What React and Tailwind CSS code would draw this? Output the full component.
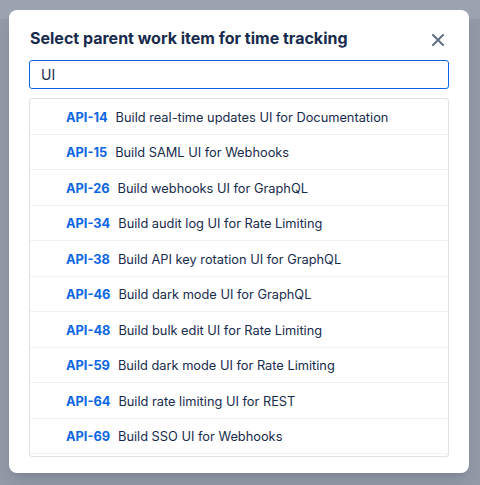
import React, { useState } from 'react';

const items = [
  { key: 'API-14', summary: 'Build real-time updates UI for Documentation' },
  { key: 'API-15', summary: 'Build SAML UI for Webhooks' },
  { key: 'API-26', summary: 'Build webhooks UI for GraphQL' },
  { key: 'API-34', summary: 'Build audit log UI for Rate Limiting' },
  { key: 'API-38', summary: 'Build API key rotation UI for GraphQL' },
  { key: 'API-46', summary: 'Build dark mode UI for GraphQL' },
  { key: 'API-48', summary: 'Build bulk edit UI for Rate Limiting' },
  { key: 'API-59', summary: 'Build dark mode UI for Rate Limiting' },
  { key: 'API-64', summary: 'Build rate limiting UI for REST' },
  { key: 'API-69', summary: 'Build SSO UI for Webhooks' },
];

const App = () => {
  const [query, setQuery] = useState('UI');

  return (
    <div className="relative w-[480px] h-[485px] overflow-hidden bg-[#929aa8] font-['Inter','Liberation_Sans',sans-serif]">
      <div className="absolute inset-x-0 top-0 h-[19px] bg-[#9ca3b0]" />
      <div className="relative pt-[10px] pl-[9px]">
        <div className="w-[460px] h-[463px] bg-white rounded-[8px] shadow-lg px-[20px] pt-[18px]">
          <div className="flex items-center justify-between h-[20px]">
            <h3 className="text-[16px] font-bold text-[#172b4d] pl-px">
              Select parent work item for time tracking
            </h3>
            <button type="button" className="w-[20px] h-[20px] flex items-center justify-center mr-[1px] mt-[3px]">
              <svg width="12" height="12" viewBox="0 0 12 12" fill="none">
                <path d="M1 1L11 11M11 1L1 11" stroke="#626f86" strokeWidth="2" strokeLinecap="round" />
              </svg>
            </button>
          </div>
          <input
            type="text"
            value={query}
            onChange={(e) => setQuery(e.target.value)}
            className="mt-[12px] w-[420px] h-[29px] border border-[#0c66e4] rounded-[3px] px-[11px] text-[14px] text-[#172b4d] outline-none"
            autoFocus
          />
          <div className="mt-[9px] w-[420px] h-[359px] border border-[#dfe1e6] rounded-[3px] overflow-hidden">
            {items.map((item) => (
              <div key={item.key} className="h-[35.5px] flex items-center gap-[8px] pl-[36px] pt-[2px] border-b border-[#f1f2f4] text-[12.8px]">
                <span className="font-bold text-[#0c66e4]">{item.key}</span>
                <span className="text-[#172b4d]">{item.summary}</span>
              </div>
            ))}
          </div>
        </div>
      </div>
    </div>
  );
};

export default App;
